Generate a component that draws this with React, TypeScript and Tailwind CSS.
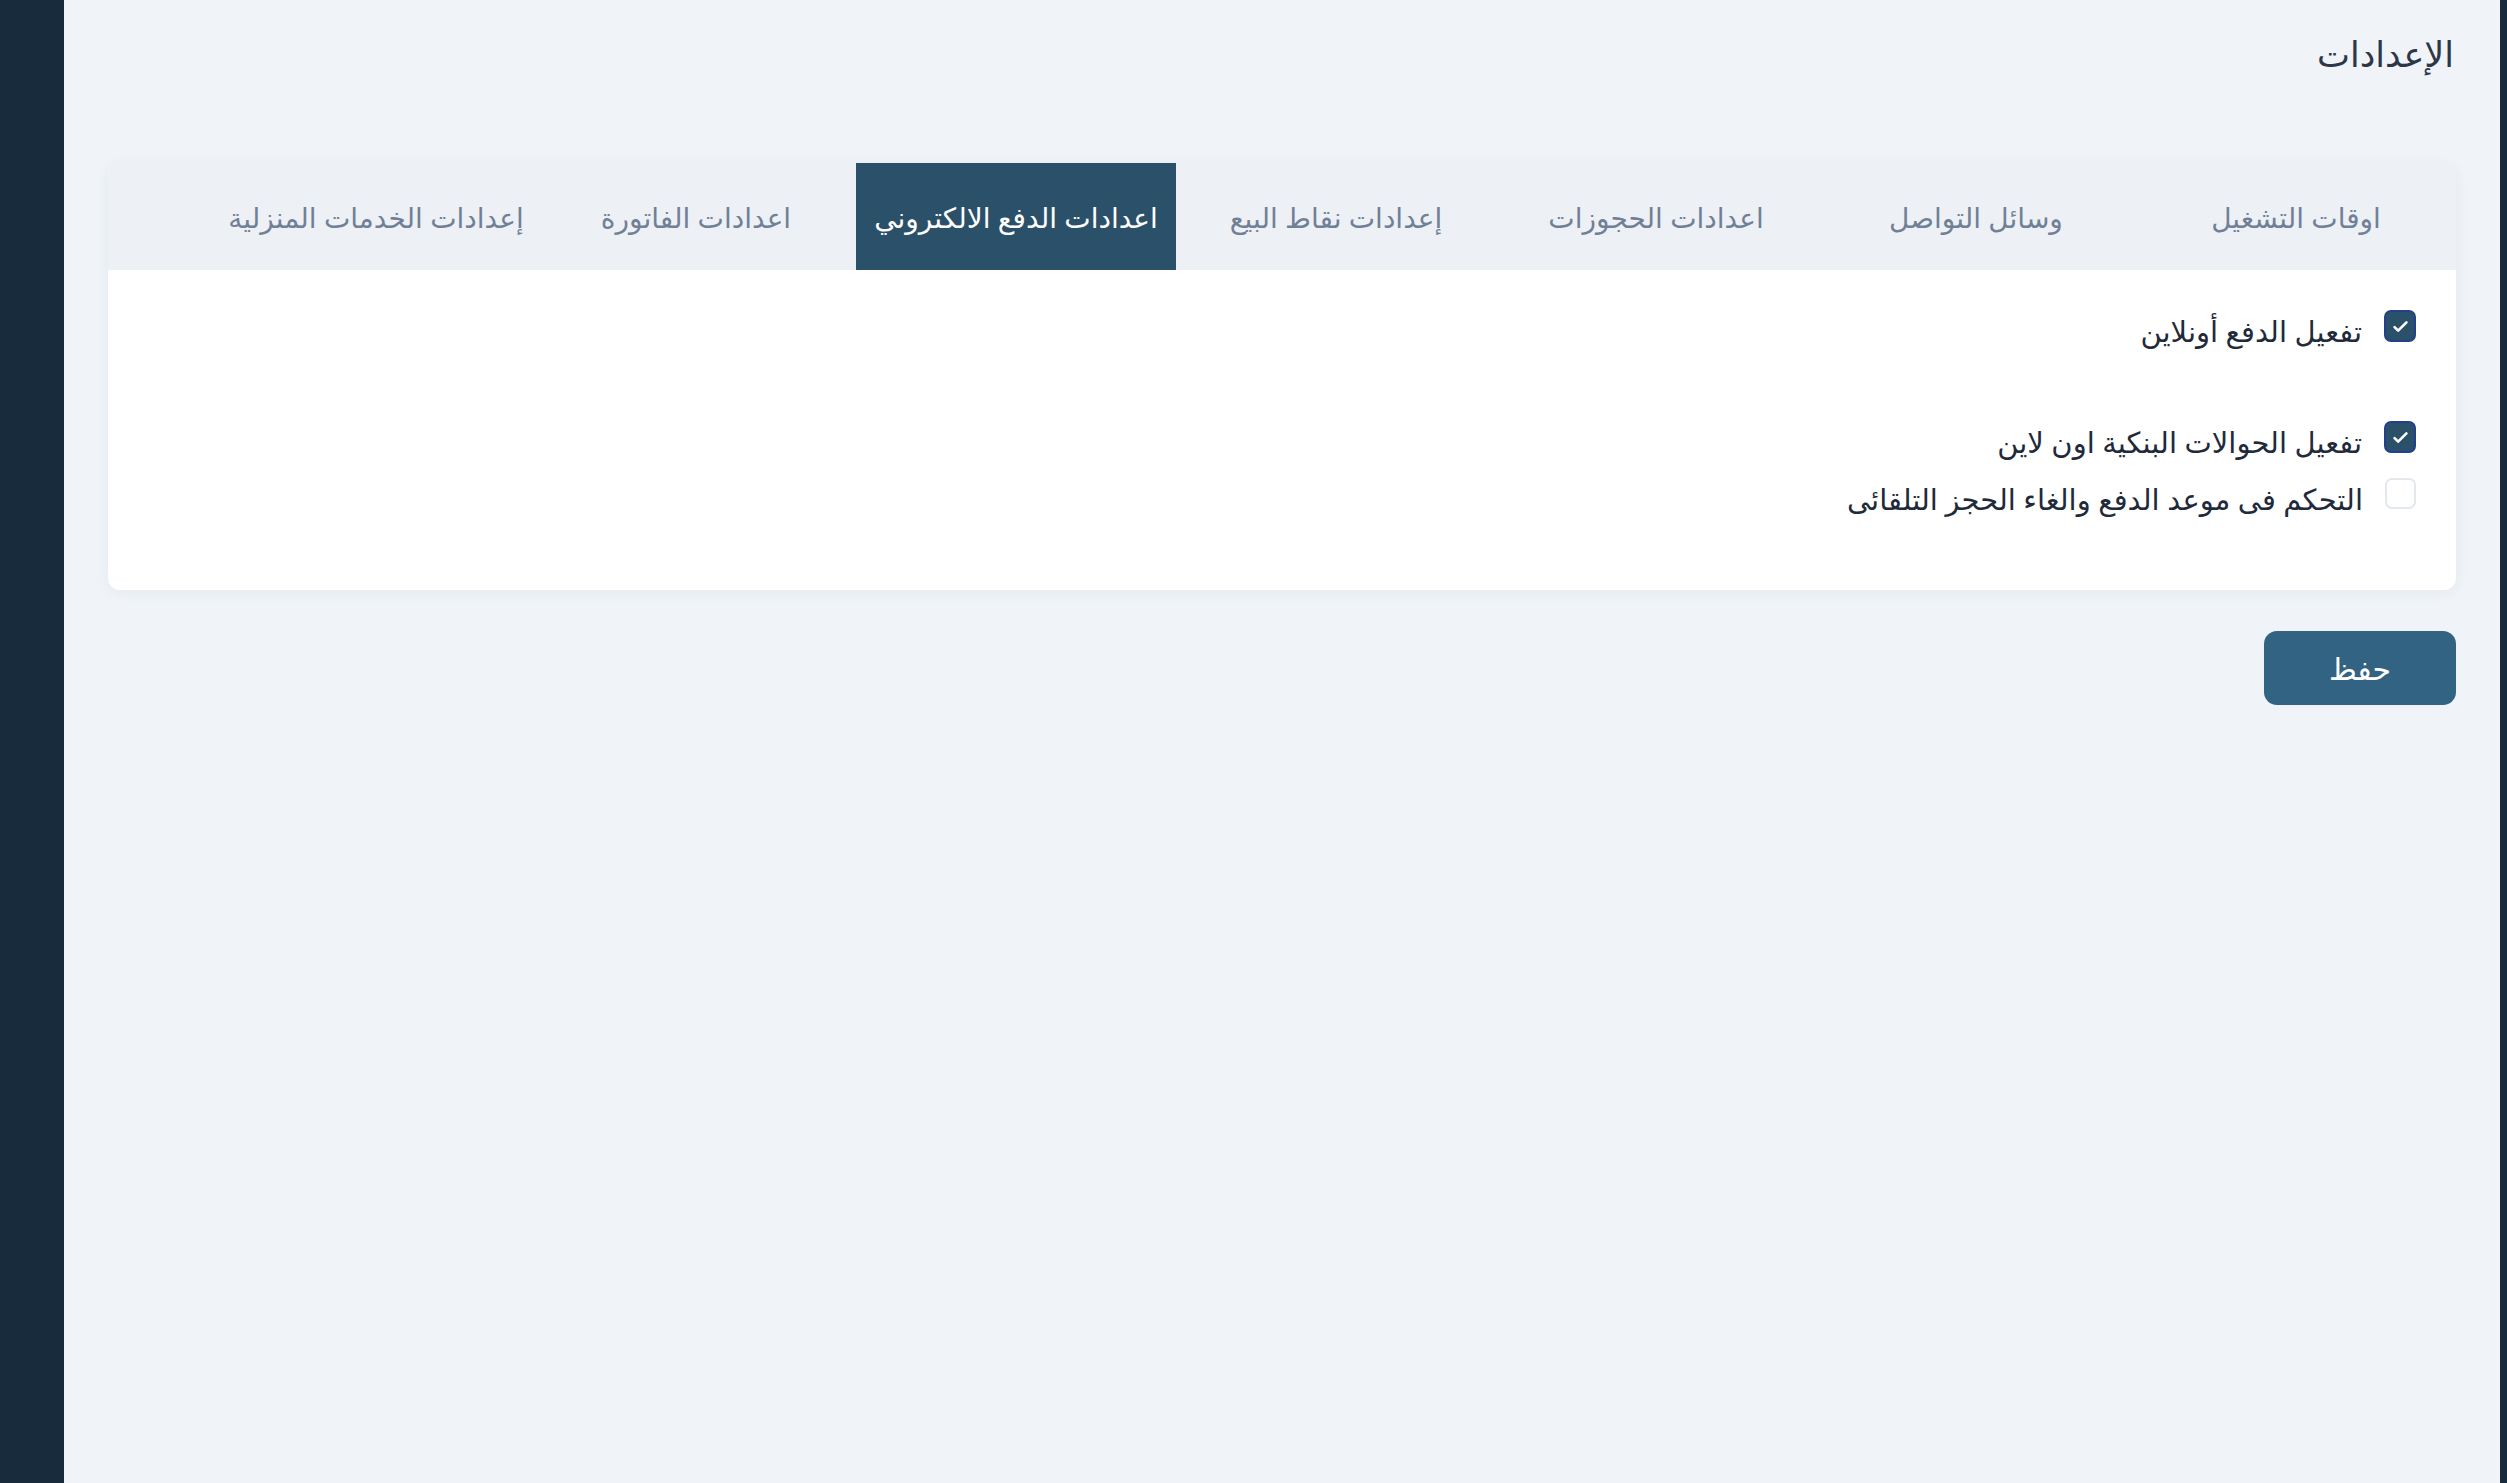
import { useState } from "react";

const tabs = [
  "اوقات التشغيل",
  "وسائل التواصل",
  "اعدادات الحجوزات",
  "إعدادات نقاط البيع",
  "اعدادات الدفع الالكتروني",
  "اعدادات الفاتورة",
  "إعدادات الخدمات المنزلية",
];

function Check({ on }: { on: boolean }) {
  return (
    <div
      className={
        on
          ? "w-[32px] h-[32px] shrink-0 rounded-[7px] bg-[#2b5069] border-2 border-[#23408e] flex items-center justify-center"
          : "w-[31px] h-[31px] shrink-0 rounded-[7px] bg-white border-2 border-[#e3e8ee]"
      }
    >
      {on && (
        <svg width="19" height="19" viewBox="0 0 16 16" fill="none">
          <path d="M3 8.5l3 3 7-7" stroke="white" strokeWidth="2.2" strokeLinecap="round" strokeLinejoin="round" />
        </svg>
      )}
    </div>
  );
}

export default function App() {
  const [active, setActive] = useState(4);
  const font = "font-['Noto_Sans','DejaVu_Sans',sans-serif]";

  return (
    <div dir="ltr" className={`flex h-screen w-full bg-[#f0f4f8] ${font}`}>
      <div className="w-[64px] shrink-0 bg-[#172b3c]" />
      <main dir="rtl" className="flex-1 px-[44px] pt-[30px]">
        <h1 className="text-[35px] leading-[48px] text-[#2d3748] pr-[2px]">الإعدادات</h1>

        <div className="mt-[85px] rounded-[12px] bg-white shadow-[0_2px_14px_rgba(30,50,80,0.06)] overflow-hidden">
          <div className="flex h-[107px] bg-[#edf1f6]">
            {tabs.map((t, i) => (
              <button
                key={t}
                onClick={() => setActive(i)}
                className={
                  i === active
                    ? "w-[320px] h-full flex items-center justify-center bg-[#2b5069] text-white text-[28px]"
                    : "w-[320px] h-full flex items-center justify-center text-[#718096] text-[28px]"
                }
              >
                {t}
              </button>
            ))}
          </div>

          <div className="pt-[40px] pr-[40px] pb-[72px] flex flex-col">
            <div className="flex items-start gap-[22px]">
              <Check on />
              <span className="text-[29px] leading-[38px] text-[#1f2a3a] mt-[2px]">تفعيل الدفع أونلاين</span>
            </div>
            <div className="flex items-start gap-[22px] mt-[71px]">
              <Check on />
              <span className="text-[29px] leading-[38px] text-[#1f2a3a] mt-[2px]">تفعيل الحوالات البنكية اون لاين</span>
            </div>
            <div className="flex items-start gap-[22px] mt-[17px]">
              <Check on={false} />
              <span className="text-[29px] leading-[38px] text-[#1f2a3a] mt-[2px]">التحكم فى موعد الدفع والغاء الحجز التلقائى</span>
            </div>
          </div>
        </div>

        <div className="mt-[41px] flex">
          <button className="w-[192px] h-[74px] rounded-[13px] bg-[#336383] text-white text-[30px]">حفظ</button>
        </div>
      </main>
      <div className="w-[7px] shrink-0 bg-[#172b3c]" />
    </div>
  );
}
